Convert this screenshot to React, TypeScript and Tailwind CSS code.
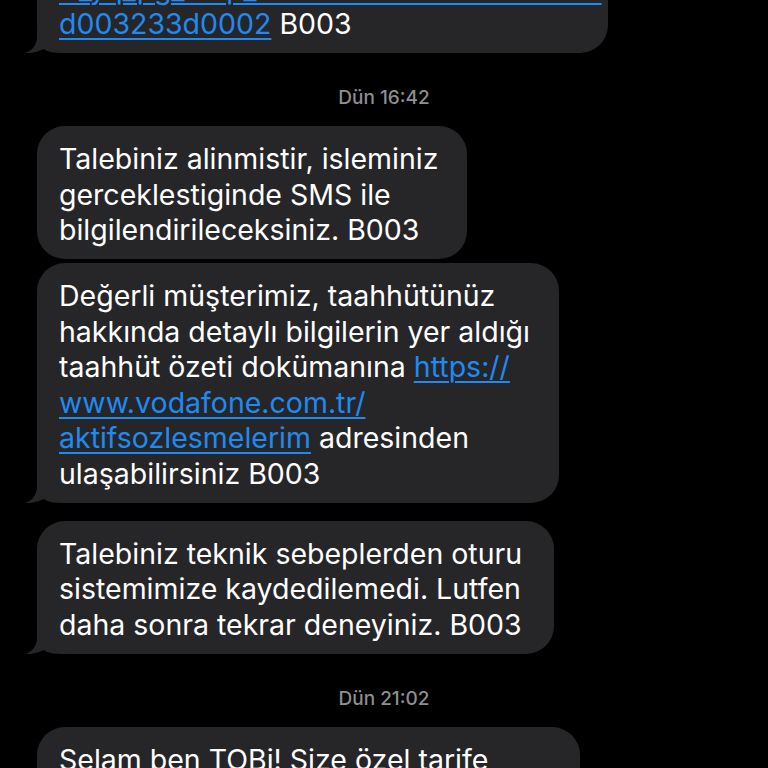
import type { ReactNode } from 'react'

const font = "font-['Inter','Liberation_Sans',Arial,sans-serif]"

function Tail() {
  return (
    <svg
      className="absolute left-[-12px] bottom-0 h-[28px] w-[40px]"
      viewBox="0 0 40 28"
      aria-hidden
    >
      <path
        d="M12 0 L12 12 C12 20 7 26 0 28 C6 28.5 12 27 19 24 C23 27 28 28 40 28 L40 0 Z"
        fill="#262628"
      />
    </svg>
  )
}

function Bubble({ width, tail, children }: { width: string; tail?: boolean; children: ReactNode }) {
  return (
    <div className={`relative ${width}`}>
      {tail && <Tail />}
      <div className="relative rounded-[28px] bg-[#262628] pl-[22px] pr-[10px] pt-[15px] pb-[11.5px] text-[28.5px] leading-[35.5px] text-white whitespace-nowrap">
        {children}
      </div>
    </div>
  )
}

function A({ children }: { children: ReactNode }) {
  return (
    <span className="text-[#1f8af2] underline decoration-[2px] underline-offset-[4px]">{children}</span>
  )
}

function Stamp({ children }: { children: ReactNode }) {
  return (
    <div className="mt-[33px] mb-[16px] -ml-[37px] w-[768px] text-center text-[19px] leading-[24px] font-medium text-[#8e8e93]">
      {children}
    </div>
  )
}

export default function App() {
  return (
    <div className={`h-[768px] w-full overflow-hidden bg-black ${font}`}>
      <div className="flex flex-col items-start pl-[37px] mt-[-80px]">
        <Bubble width="w-[571px]" tail>
          <div><A>https://m.vodafone.com.tr/kampanya/</A></div>
          <div><A>tr_yq_pg_kmp_0302a9b1e7c4f8a6d0e2c</A></div>
          <div><A>d003233d0002</A> B003</div>
        </Bubble>

        <Stamp>Dün 16:42</Stamp>

        <Bubble width="w-[430px]">
          <div>Talebiniz alinmistir, isleminiz</div>
          <div>gerceklestiginde SMS ile</div>
          <div>bilgilendirileceksiniz. B003</div>
        </Bubble>

        <div className="mt-[4px]">
          <Bubble width="w-[522px]" tail>
            <div>Değerli müşterimiz, taahhütünüz</div>
            <div>hakkında detaylı bilgilerin yer aldığı</div>
            <div>taahhüt özeti dokümanına <A>https://</A></div>
            <div><A>www.vodafone.com.tr/</A></div>
            <div><A>aktifsozlesmelerim</A> adresinden</div>
            <div>ulaşabilirsiniz B003</div>
          </Bubble>
        </div>

        <div className="mt-[18px]">
          <Bubble width="w-[517px]" tail>
            <div>Talebiniz teknik sebeplerden oturu</div>
            <div>sistemimize kaydedilemedi. Lutfen</div>
            <div>daha sonra tekrar deneyiniz. B003</div>
          </Bubble>
        </div>

        <Stamp>Dün 21:02</Stamp>

        <Bubble width="w-[543px]">
          <div>Selam ben TOBi! Size özel tarife</div>
          <div>fırsatlarını görmek için tıklayın</div>
        </Bubble>
      </div>
    </div>
  )
}
